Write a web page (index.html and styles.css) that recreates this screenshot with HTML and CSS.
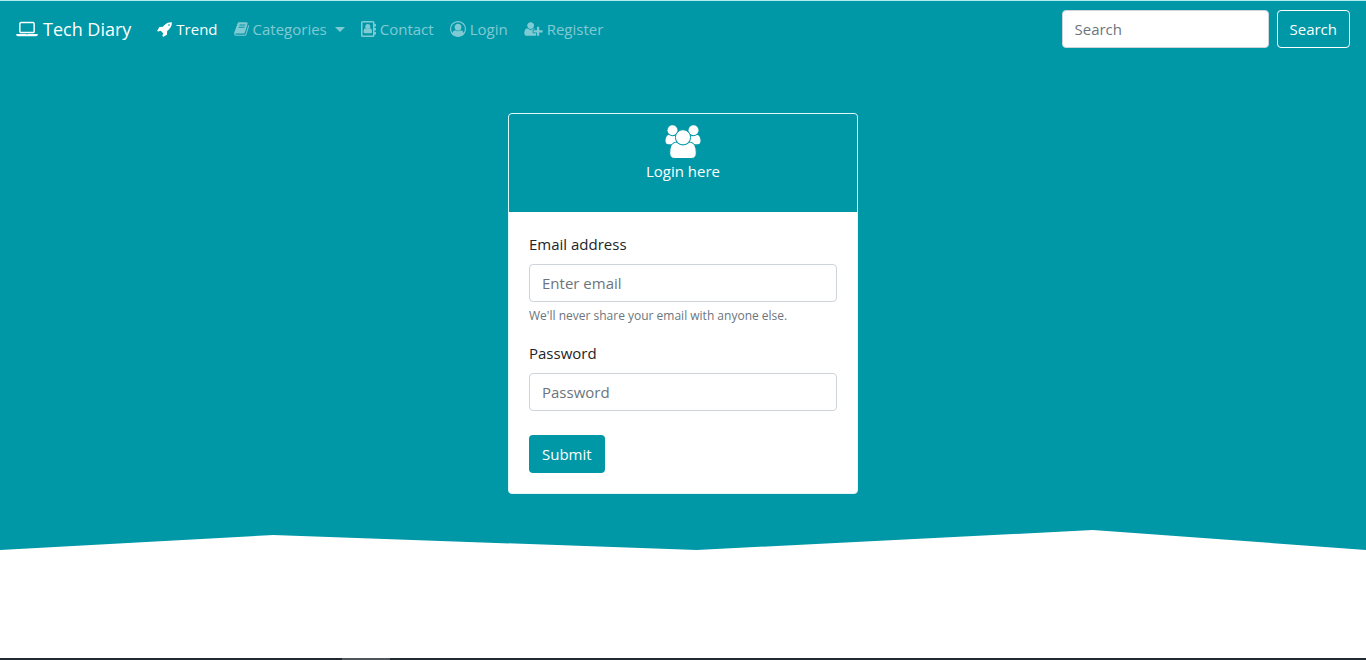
FILE: index.html
```html
<!DOCTYPE html>
<html lang="en">
<head>
<meta charset="utf-8">
<meta name="viewport" content="width=device-width, initial-scale=1">
<title>Tech Diary - Login</title>
<link rel="stylesheet" href="styles.css">
</head>
<body>
<nav class="navbar">
  <a class="brand" href="#">
    <svg class="brand-icon" viewBox="0 0 1920 1792" aria-hidden="true"><path d="M416 1280q-66 0-113-47t-47-113v-704q0-66 47-113t113-47h1088q66 0 113 47t47 113v704q0 66-47 113t-113 47h-1088zm-32-864v704q0 13 9.5 22.5t22.5 9.5h1088q13 0 22.5-9.5t9.5-22.5v-704q0-13-9.5-22.5t-22.5-9.5h-1088q-13 0-22.5 9.5t-9.5 22.5zm1376 928h160v96q0 40-47 68t-113 28h-1600q-66 0-113-28t-47-68v-96h1760zm-720 96q16 0 16-16t-16-16h-160q-16 0-16 16t16 16h160z"/></svg>
    <span>Tech Diary</span>
  </a>
  <ul class="nav-list">
    <li><a class="nav-link active" href="#">
      <svg class="icon icon-narrow" viewBox="0 0 1680 1792" aria-hidden="true"><path d="M1440 448q0-40-28-68t-68-28-68 28-28 68 28 68 68 28 68-28 28-68zm224-288q0 249-75.5 430.5t-253.5 360.5q-81 80-195 176l-20 379q-2 16-16 26l-384 224q-7 4-16 4-12 0-23-9l-64-64q-13-14-8-32l85-276-281-281-276 85q-3 1-9 1-14 0-23-9l-64-64q-17-19-5-39l224-384q10-14 26-16l379-20q96-114 176-195 188-187 358-258t431-71q14 0 24 9.5t10 22.5z"/></svg>
      <span>Trend</span></a></li>
    <li><a class="nav-link" href="#">
      <svg class="icon icon-narrow" viewBox="48 0 1680 1792" aria-hidden="true"><path d="M1703 478q40 57 18 129l-275 906q-19 64-76.5 107.5t-122.5 43.5h-923q-77 0-148.5-53.5t-99.5-131.5q-24-67-2-127 0-4 3-27t4-37q1-8-3-21.5t-3-19.5q2-11 8-21t16.5-23.5 16.5-23.5q23-38 45-91.5t30-91.5q3-10 .5-30t-.5-28q3-11 17-28t17-23q21-36 42-92t25-90q1-9-2.5-32t.5-28q4-13 22-30.5t22-22.5q19-26 42.5-84.5t27.5-96.5q1-8-3-25.5t-2-26.5q2-8 9-18t18-23 17-21q8-12 16.5-30.5t15-35 16-36 19.5-32 26.5-23.5 36-11.5 47.5 5.5l-1 3q38-9 51-9h761q74 0 114 56t18 130l-274 906q-36 119-71.5 153.5t-128.5 34.5h-869q-27 0-38 15-11 16-1 43 24 70 144 70h923q29 0 56-15.5t35-41.5l300-987q7-22 5-57 38 15 59 43zm-1064 2q-4 13 2 22.5t20 9.5h608q13 0 25.5-9.5t16.5-22.5l21-64q4-13-2-22.5t-20-9.5h-608q-13 0-25.5 9.5t-16.5 22.5zm-83 256q-4 13 2 22.5t20 9.5h608q13 0 25.5-9.5t16.5-22.5l21-64q4-13-2-22.5t-20-9.5h-608q-13 0-25.5 9.5t-16.5 22.5z"/></svg>
      <span>Categories</span><span class="caret"></span></a></li>
    <li><a class="nav-link" href="#">
      <svg class="icon icon-narrow" viewBox="0 0 15 16" aria-hidden="true"><path fill-rule="evenodd" d="M1.500 0H12q1.500 0 1.500 1.500V3h1q.5 0 .5.5v1.500q0 .5-.5.500h-1V7h1q.5 0 .5.5V9q0 .5-.5.5h-1V11h1q.5 0 .5.5V13q0 .5-.5.5h-1v1q0 1.500-1.500 1.500H1.500Q0 16 0 14.500v-13Q0 0 1.500 0zm0 1.500v13H12v-13z"/><circle cx="6.800" cy="5.500" r="2.500"/><path d="M4.600 7.300q2.200 1.700 4.400 0 2 .2 2 3.600 0 1.400-1.400 1.400H4q-1.400 0-1.400-1.400 0-3.400 2-3.600z"/></svg>
      <span>Contact</span></a></li>
    <li><a class="nav-link" href="#">
      <svg class="icon" viewBox="0 0 1792 1792" aria-hidden="true"><path d="M896 0q182 0 348 71t286 191 191 286 71 348q0 181-70.500 347t-190.500 286-286 191.500-349 71.500-349-71-285.500-191.500-190.500-286-71-347.500 71-348 191-286 286-191 348-71zm619 1351q149-205 149-455 0-156-61-298t-164-245-245-164-298-61-298 61-245 164-164 245-61 298q0 250 149 455 66-327 306-327 131 128 313 128t313-128q240 0 306 327zm-235-647q0-159-112.500-271.500t-271.500-112.500-271.500 112.500-112.500 271.500 112.500 271.500 271.500 112.500 271.500-112.500 112.500-271.500z"/></svg>
      <span>Login</span></a></li>
    <li><a class="nav-link" href="#">
      <svg class="icon icon-wide" viewBox="0 0 2048 1792" aria-hidden="true"><path d="M704 896q-159 0-271.500-112.500t-112.500-271.500 112.500-271.500 271.500-112.500 271.500 112.500 112.500 271.500-112.500 271.500-271.500 112.500zm960 128h352q13 0 22.500 9.500t9.500 22.500v192q0 13-9.500 22.500t-22.500 9.500h-352v352q0 13-9.500 22.500t-22.500 9.500h-192q-13 0-22.500-9.500t-9.500-22.500v-352h-352q-13 0-22.500-9.500t-9.500-22.500v-192q0-13 9.500-22.500t22.500-9.500h352v-352q0-13 9.500-22.500t22.500-9.500h192q13 0 22.500 9.500t9.500 22.500v352zm-736 224q0 52 38 90t90 38h256v238q-68 50-171 50h-874q-121 0-194-69t-73-190q0-53 3.500-103.500t14-109 26.500-108.500 43-97.500 62-81 85.500-53.500 111.500-20q19 0 39 17 79 61 154.500 91.500t164.500 30.500 164.500-30.500 154.500-91.500q20-17 39-17 132 0 217 96h-223q-52 0-90 38t-38 90v192z"/></svg>
      <span>Register</span></a></li>
  </ul>
  <form class="search" role="search">
    <input class="field search-field" type="search" placeholder="Search" aria-label="Search">
    <button class="btn btn-outline" type="submit">Search</button>
  </form>
</nav>

<main class="banner">
  <section class="card">
    <header class="card-header">
      <svg class="group-icon" viewBox="0 0 36 34" aria-hidden="true">
        <circle cx="7.500" cy="5.200" r="5"/><circle cx="28.500" cy="5.200" r="5"/>
        <path d="M3.500 9.800q4 2.500 7.500.4v9.100H3.500Q.5 19.300.5 15.800q0-4.500 3-6z"/>
        <path d="M32.500 9.800q-4 2.500-7.500.4v9.100h7.500q3 0 3-3.500 0-4.500-3-6z"/>
        <path class="outlined" d="M10.500 17.300q1-.3 1.800.4 5.700 4.100 11.400 0 .8-.7 1.800-.4 5.800.7 5.800 10.700 0 5.500-5.300 5.500H10q-5.300 0-5.300-5.500 0-10 5.800-10.700z"/>
        <circle class="outlined" cx="18" cy="12.300" r="7.600"/>
      </svg>
      <p class="card-title">Login here</p>
    </header>
    <form class="card-body">
      <div class="group">
        <label for="email">Email address</label>
        <input class="field" id="email" type="email" placeholder="Enter email" aria-describedby="email-help">
        <small class="help" id="email-help">We'll never share your email with anyone else.</small>
      </div>
      <div class="group">
        <label for="password">Password</label>
        <input class="field" id="password" type="password" placeholder="Password">
      </div>
      <button class="btn btn-primary" type="submit">Submit</button>
    </form>
  </section>
</main>

<footer class="bottom-bar"><span class="bottom-bar-mark"></span></footer>
</body>
</html>
```
FILE: styles.css
```css
:root {
  --teal: #0097a7;
}

* {
  box-sizing: border-box;
}

body {
  display: flex;
  flex-direction: column;
  min-height: 100vh;
  margin: 0;
  background: #fff;
  color: #212529;
  font-family: "Segoe UI", "Open Sans", "Noto Sans", sans-serif;
  font-size: 15px;
  line-height: 24px;
}

svg {
  fill: currentColor;
  flex: none;
}

.navbar {
  display: flex;
  align-items: center;
  padding: 8px 16px;
  border-top: 1px solid #b2ebf2;
  background: var(--teal);
}

.brand {
  display: flex;
  align-items: center;
  gap: 5px;
  margin-right: 18px;
  color: #fff;
  font-size: 18px;
  line-height: 30px;
  text-decoration: none;
}

.brand-icon {
  width: 22px;
  height: 20px;
}

.nav-list {
  display: flex;
  flex: 1;
  margin: 0;
  padding: 0;
  list-style: none;
}

.nav-link {
  display: flex;
  align-items: center;
  gap: 4px;
  padding: 8px;
  color: rgba(255, 255, 255, 0.5);
  text-decoration: none;
}

.nav-link.active {
  color: #fff;
}

.icon {
  width: 16px;
  height: 16px;
}

.icon-narrow {
  width: 15px;
}

.icon-wide {
  width: 19px;
}

.caret {
  margin-left: 4px;
  border-top: 5px solid;
  border-right: 5px solid transparent;
  border-left: 5px solid transparent;
}

.search {
  display: flex;
  gap: 8px;
}

.field {
  display: block;
  width: 100%;
  height: 38px;
  padding: 6px 12px;
  border: 1px solid #ced4da;
  border-radius: 4px;
  background: #fff;
  color: #495057;
  font: inherit;
}

.field::placeholder {
  color: #6c757d;
  opacity: 1;
}

.search-field {
  width: 207px;
}

.btn {
  height: 38px;
  padding: 6px 12px;
  border: 1px solid transparent;
  border-radius: 4px;
  color: #fff;
  font: inherit;
  cursor: pointer;
}

.btn-outline {
  border-color: #fff;
  background: transparent;
}

.btn-primary {
  margin-top: 8px;
  background: var(--teal);
}

.banner {
  display: flex;
  justify-content: center;
  padding: 56px 16px;
  background: var(--teal);
  clip-path: polygon(0 0, 100% 0, 100% 100%, 80% calc(100% - 20px), 51% 100%, 20% calc(100% - 15px), 0 100%);
}

.card {
  width: 100%;
  max-width: 350px;
  overflow: hidden;
  border: 1px solid #e0f7fa;
  border-radius: 4px;
  background: #fff;
}

.card-header {
  display: flex;
  flex-direction: column;
  align-items: center;
  padding: 11px 20px 29px;
  background: var(--teal);
  color: #fff;
}

.group-icon {
  width: 36px;
  height: 34px;
}

.outlined {
  stroke: var(--teal);
  stroke-width: 1;
}

.card-title {
  margin: 0;
}

.card-body {
  padding: 20px;
}

.group {
  margin-bottom: 16px;
}

.group label {
  display: block;
  margin-bottom: 8px;
}

.help {
  display: block;
  margin-top: 4px;
  color: #6c757d;
  font-size: 12px;
  line-height: 19px;
}

.bottom-bar {
  display: flex;
  height: 2px;
  margin-top: auto;
  padding-left: 25%;
  background: #1f2a33;
}

.bottom-bar-mark {
  width: 48px;
  background: #4d565d;
}
```
